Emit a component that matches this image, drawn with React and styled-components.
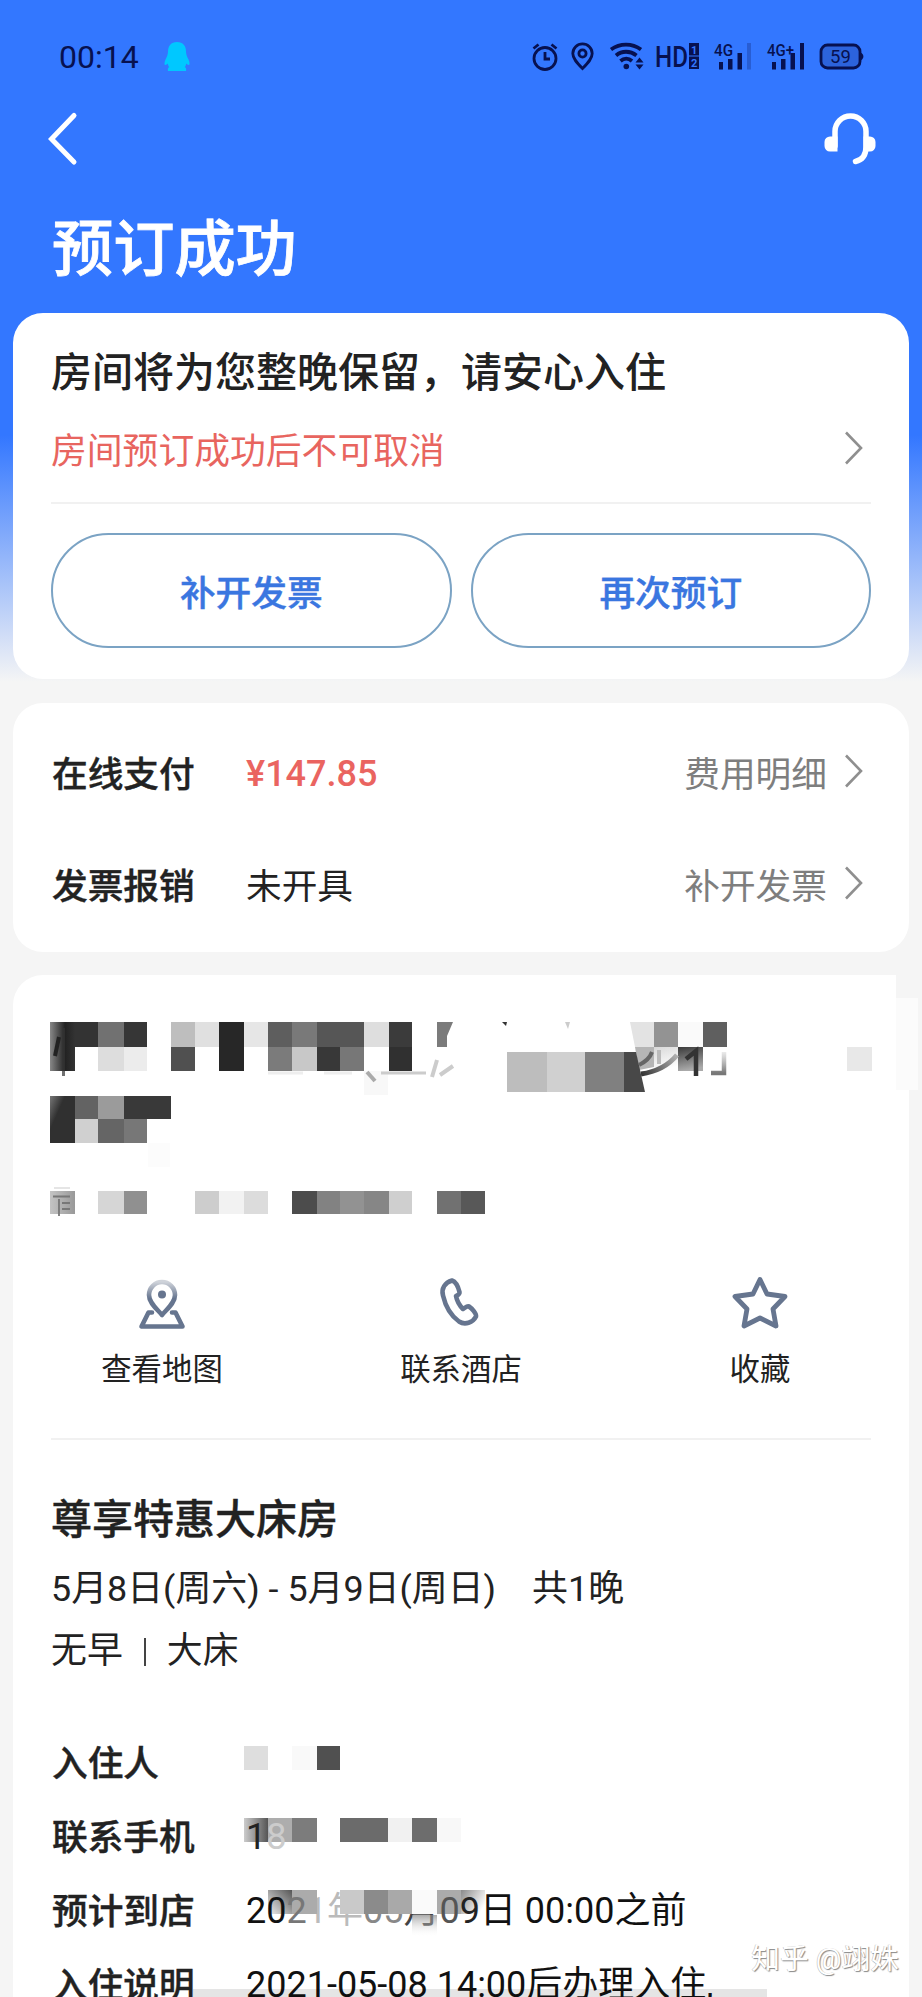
import { styled, createGlobalStyle } from "styled-components";

const GlobalStyle = createGlobalStyle`
  * {
    box-sizing: border-box;
  }
  body {
    margin: 0;
    background: #f5f5f5;
    font-family: Roboto, "Noto Sans CJK SC", sans-serif;
    color: #222;
  }
  svg {
    display: block;
    flex-shrink: 0;
    overflow: visible;
  }
  h1, h2, p {
    margin: 0;
    font-weight: 500;
  }
`;

const Screen = styled.div`
  position: relative;
  width: 922px;
  height: 1997px;
  overflow: hidden;
  background: linear-gradient(180deg, #3377ff 0, #3377ff 435px, #f5f5f5 682px);
`;

const StatusBar = styled.div`
  display: flex;
  align-items: center;
  height: 114px;
  padding: 0 58px 0 59px;
  color: #071150;
`;

const Time = styled.div`
  width: 105px;
  font-size: 32px;
  line-height: 40px;
`;

const StatusIcons = styled.div`
  display: flex;
  align-items: center;
  margin-left: auto;
`;

const Gap = styled.span`
  width: ${({ $w }) => $w}px;
`;

const NavBar = styled.div`
  display: flex;
  align-items: center;
  justify-content: space-between;
  height: 50px;
  padding: 0 46px 0 48px;
`;

const PageTitle = styled.h1`
  padding-left: 52px;
  height: 149px;
  font-size: 61.2px;
  line-height: 173px;
  color: white;
  -webkit-text-stroke: 0.8px white;
`;

const Card = styled.section`
  margin: 0 13px ${({ $gap }) => $gap || 0}px;
  padding: 0 38px;
  height: ${({ $h }) => $h}px;
  border-radius: 30px;
  background: white;
`;

const KeepText = styled.h2`
  padding-top: 32px;
  font-size: 41px;
  line-height: 56px;
  white-space: nowrap;
`;

const CancelRow = styled.div`
  display: flex;
  align-items: center;
  justify-content: space-between;
  height: 93px;
  margin-bottom: 8px;
  padding-right: 8px;
  font-size: 35.8px;
  color: #e8655f;
`;

const Divider = styled.div`
  height: 2px;
  background: #f1f1f1;
`;

const Buttons = styled.div`
  display: flex;
  gap: 19px;
  padding-top: 29px;
`;

const Button = styled.button`
  flex: 1;
  height: 115px;
  padding: 0;
  border: 2px solid #7ba3c4;
  border-radius: 58px;
  background: white;
  font-family: inherit;
  font-size: 35.7px;
  font-weight: 500;
  color: #3a76e0;
  -webkit-text-stroke: 0.4px #3a76e0;
`;

const PayCard = styled(Card)`
  padding-top: 12px;
`;

const PayRow = styled.div`
  display: flex;
  align-items: center;
  height: 112px;
  padding-right: 8px;
  font-size: 35.7px;
`;

const Label = styled.div`
  width: 195px;
  padding-left: 1px;
  font-size: 35.7px;
  font-weight: 500;
  -webkit-text-stroke: 0.4px #222;
`;

const Price = styled.div`
  padding-top: 6px;
  font-size: 36px;
  font-weight: 500;
  color: #ea6460;
`;

const More = styled.div`
  display: flex;
  align-items: center;
  gap: 18px;
  margin-left: auto;
  color: #7e7e7e;
`;

const HotelCard = styled(Card)`
  position: relative;
  border-radius: 30px 0 0 0;
`;

const CornerPatch = styled.div`
  position: absolute;
  top: 0;
  right: -9px;
  width: 22px;
  height: 115px;
  background: linear-gradient(180deg, #f5f5f5 0, #f5f5f5 23px, #fbfbfb 23px);
`;

const HotelName = styled.div`
  padding-top: 39px;
  margin: 0 -1px;
`;

const Actions = styled.div`
  display: grid;
  grid-template-columns: repeat(3, 299px);
  justify-content: center;
  padding-top: 58px;
  height: 220px;
`;

const Action = styled.div`
  display: flex;
  flex-direction: column;
  align-items: center;
  gap: 18px;
  font-size: 30.4px;
  line-height: 44px;
`;

const RoomName = styled.h2`
  padding-top: 50px;
  font-size: 41px;
  line-height: 60px;
  -webkit-text-stroke: 0.4px #222;
`;

const RoomLine = styled.p`
  display: flex;
  font-size: 35.9px;
  font-weight: 400;
  line-height: ${({ $h }) => $h}px;
  white-space: pre;
`;

const Nights = styled.span`
  margin-left: 36px;
`;

const Bar = styled.span`
  width: 2px;
  height: 28px;
  margin: 10px 21px 0;
  background: #444;
`;

const Details = styled.div`
  padding-top: 49px;
`;

const DetailRow = styled.div`
  display: flex;
  align-items: center;
  height: 74px;
  font-size: 36px;
`;

const Value = styled.div`
  position: relative;
  margin-top: 6px;
  line-height: 48px;
  color: #111;
  white-space: nowrap;
`;

const Faded = styled.span`
  position: relative;
  z-index: ${({ $above }) => ($above ? 2 : 0)};
  color: ${({ $color }) => $color};
`;

const Blocks = styled.svg`
  position: absolute;
  left: -2px;
  top: ${({ $top }) => $top}px;
  z-index: 1;
`;

const HomeBar = styled.div`
  position: absolute;
  left: 193px;
  bottom: 0;
  width: 574px;
  height: 8px;
  background: rgba(0, 0, 0, 0.1);
`;

const Watermark = styled.div`
  position: absolute;
  right: 23px;
  bottom: 19px;
  font-size: 28.7px;
  line-height: 38px;
  color: #fff;
  text-shadow: 1px 1px 1px #888, -0.5px -0.5px 0 #bbb;
`;

const AlarmIcon = () => (
  <svg width="26" height="30" viewBox="0 0 26 30" fill="none" stroke="currentColor" strokeWidth="2.8">
    <circle cx="13" cy="16.5" r="11" />
    <path d="M13 10v7h5" />
    <path d="M1.5 6.5 6.5 2.5M24.5 6.5l-5-4" />
  </svg>
);

const PinIcon = () => (
  <svg width="23" height="30" viewBox="0 0 23 30" fill="none" stroke="currentColor" strokeWidth="2.8">
    <path d="M11.5 26.5C6 21 1.8 16.5 1.8 11.5a9.7 9.7 0 0 1 19.4 0c0 5-4.2 9.500-9.700 15z" />
    <circle cx="11.5" cy="11.5" r="3.6" />
  </svg>
);

const WifiIcon = () => (
  <svg width="36" height="30" viewBox="0 0 36 30" fill="none" stroke="currentColor" strokeWidth="3.8">
    <path d="M1 7.5c9-6.500 21-6.500 30 0" />
    <path d="M6 13.5c6-5 14-5 20.500 0" />
    <path d="M10.5 19c3.500-3 8-3 11.500 0" />
    <circle cx="16.3" cy="24.5" r="2.8" fill="currentColor" stroke="none" />
    <path d="M25.5 20.5h8l-4-5zM25.500 22.500h8l-4 5z" fill="currentColor" stroke="none" />
  </svg>
);

const HdIcon = () => (
  <svg width="43" height="30" viewBox="0 0 43 30" fill="currentColor">
    <text x="-1" y="25" fontFamily="Roboto" fontSize="29" fontWeight="500" textLength="33" lengthAdjust="spacingAndGlyphs">
      HD
    </text>
    <path d="M33 1h10v12.5H33zM33 14.500h10V27H33z" />
    <text x="35" y="11.5" fontFamily="Roboto" fontSize="11" fontWeight="700" fill="#3377ff">1</text>
    <text x="35" y="25" fontFamily="Roboto" fontSize="11" fontWeight="700" fill="#3377ff">2</text>
  </svg>
);

const SignalIcon = ({ label, full }) => (
  <svg width="38" height="30" viewBox="0 0 38 30" fill="currentColor">
    <text
      x="0"
      y="14"
      fontFamily="Roboto"
      fontSize="17"
      fontWeight="500"
      textLength={full ? 27 : 19}
      lengthAdjust="spacingAndGlyphs"
    >
      {label}
    </text>
    <rect x="5" y="20" width="4" height="7.5" />
    <rect x="14" y="17" width="4.5" height="10.5" />
    <rect x="23.5" y="11" width="4.5" height="16.5" />
    <rect x="33" y="1" width="4" height="26.5" opacity={full ? 1 : 0.25} />
  </svg>
);

const BatteryIcon = () => (
  <svg width="44" height="30" viewBox="0 0 44 30">
    <rect x="1" y="3" width="39" height="23" rx="6.5" fill="#2c63dc" stroke="currentColor" strokeWidth="2.8" />
    <path d="M40 10.5c4.500 1 4.500 7 0 8z" fill="currentColor" />
    <text x="20.5" y="21" fontFamily="Roboto" fontSize="18.5" textAnchor="middle" fill="currentColor">59</text>
  </svg>
);

const PenguinIcon = () => (
  <svg width="26" height="30" viewBox="0 0 26 30" fill="#00c8ff">
    <path d="M13 0c6 0 9 4 9 9.500 0 3 1 5 2.500 8 1 2.500 1.500 5 .5 5.500-1 .3-2-1-2.700-1.500-.3 1.500-1 3-1.500 3.500 1.200.8 1.700 2 1.200 4H4c-.5-2 0-3.200 1.200-4-.5-.5-1.200-2-1.500-3.500C3 22 2 23.300 1 23c-1-.5-.5-3 .5-5.500C3 14.500 4 12.500 4 9.500 4 4 7 0 13 0z" />
  </svg>
);

const BackIcon = () => (
  <svg width="30" height="54" viewBox="0 0 30 54" fill="none" stroke="white" strokeWidth="5" strokeLinecap="round">
    <path d="M26 3.500 3.500 27 26 50" />
  </svg>
);

const HeadsetIcon = () => (
  <svg width="52" height="54" viewBox="0 0 52 54" fill="white">
    <path
      d="M11 34V19.500a15.500 15.500 0 0 1 31 0V35c0 8-4 13-10.500 14.500"
      fill="none"
      stroke="white"
      strokeWidth="5.500"
      strokeLinecap="round"
    />
    <path d="M13.500 24.500v15H6a5.500 5.500 0 0 1-5.500-5.500v-4A5.500 5.500 0 0 1 6 24.500z" />
    <path d="M39.500 24.500v15H46a5.500 5.500 0 0 0 5.500-5.500v-4a5.500 5.500 0 0 0-5.500-5.500z" />
  </svg>
);

const Chevron = () => (
  <svg width="18" height="34" viewBox="0 0 18 34" fill="none" stroke="#8f8f8f" strokeWidth="2.6">
    <path d="M1 1.500 16 17 1 32.500" />
  </svg>
);

const MapIcon = () => (
  <svg width="52" height="54" viewBox="136 1276 52 54" fill="none" strokeWidth="4.6" strokeLinejoin="round">
    <defs>
      <linearGradient id="pin" x1="0" y1="0" x2="0" y2="1">
        <stop offset="0" stopColor="#cfd3da" />
        <stop offset="0.5" stopColor="#66758f" />
      </linearGradient>
    </defs>
    <path d="M152 1312.500h-3.500l-7 14h41l-7-14H172" stroke="#66758f" strokeLinecap="round" />
    <path d="M162 1315c-5-6-13-12-13-20a13 13 0 0 1 26 0c0 8-8 14-13 20z" fill="white" stroke="url(#pin)" />
    <circle cx="162" cy="1294.500" r="4" fill="#66758f" />
  </svg>
);

const PhoneIcon = () => (
  <svg width="52" height="54" viewBox="435 1276 52 54" fill="none" stroke="#66758f" strokeWidth="4.6" strokeLinejoin="round">
    <path d="M452 1280.500c-7 2-11 8-9 15 3 13 9 21 16 26 6 4 14 1 17-5 .5-3-4-8-7-10-2.500-1-3.500 1.500-6 2.500-4-4-6-8-7-13 2-1 4-2 3.500-4-1-4-3-10-7.500-11.500z" />
  </svg>
);

const StarIcon = () => (
  <svg width="56" height="54" viewBox="732 1276 56 54" fill="none" stroke="#66758f" strokeWidth="4.8" strokeLinejoin="round">
    <path d="m760 1279.500 7 14.500 18 2.500-12 12.500 3 17-16-8-16 8 3-17-12-12.500 18-2.500z" />
  </svg>
);

// [x, y, width, height, fill]
const nameBlocks = [
  [50, 1022, 25, 49, "url(#first)"],
  [75, 1022, 23, 25, "#333"],
  [98, 1022, 26, 25, "#717171"],
  [124, 1022, 23, 25, "#363636"],
  [98, 1047, 26, 24, "#ddd"],
  [124, 1047, 23, 24, "#ececec"],
  [171, 1022, 24, 25, "#bebebe"],
  [195, 1022, 24, 25, "#e0e0e0"],
  [171, 1047, 24, 24, "#505050"],
  [219, 1022, 25, 49, "#272727"],
  [244, 1022, 24, 25, "#e6e6e6"],
  [268, 1022, 24, 25, "#5e5e5e"],
  [292, 1022, 25, 25, "#797979"],
  [317, 1022, 47, 25, "#565656"],
  [268, 1047, 24, 24, "#7b7b7b"],
  [292, 1047, 25, 24, "#c8c8c8"],
  [317, 1047, 23, 24, "#383838"],
  [340, 1047, 24, 24, "#777"],
  [364, 1022, 25, 25, "#dedede"],
  [389, 1022, 23, 25, "#3b3b3b"],
  [389, 1047, 23, 24, "#303030"],
  [364, 1071, 24, 24, "#f8f8f8"],
  [654, 1022, 24, 25, "#939393"],
  [678, 1022, 25, 25, "#fafafa"],
  [703, 1022, 24, 25, "#5f5f5f"],
  [654, 1047, 24, 24, "url(#light)"],
  [678, 1047, 25, 24, "url(#dark)"],
  [847, 1047, 25, 24, "#e8e8e8"],
  [50, 1096, 25, 47, "url(#second)"],
  [75, 1096, 23, 23, "#636363"],
  [98, 1096, 26, 23, "#9b9b9b"],
  [124, 1096, 47, 23, "#393939"],
  [75, 1119, 23, 24, "#d0d0d0"],
  [98, 1119, 26, 24, "#656565"],
  [124, 1119, 23, 24, "#777"],
  [148, 1143, 22, 24, "#fcfcfc"],
  [50, 1191, 25, 23, "url(#third)"],
  [98, 1191, 26, 23, "#d6d6d6"],
  [124, 1191, 23, 23, "#909090"],
  [195, 1191, 24, 23, "#cdcdcd"],
  [219, 1191, 25, 23, "#f2f2f2"],
  [244, 1191, 24, 23, "#dcdcdc"],
  [292, 1191, 25, 23, "#4c4c4c"],
  [317, 1191, 23, 23, "#828282"],
  [340, 1191, 24, 23, "#929292"],
  [364, 1191, 25, 23, "#868686"],
  [389, 1191, 23, 23, "#cfcfcf"],
  [437, 1191, 24, 23, "#717171"],
  [461, 1191, 24, 23, "#585858"],
];

const guestBlocks = [
  [0, 0, 24, 24, "#dedede"],
  [48, 0, 25, 24, "#f9f9f9"],
  [73, 0, 23, 24, "#505050"],
];

const phoneBlocks = [
  [0, 0, 24, 24, "url(#phoneFade)"],
  [24, 0, 24, 24, "#adadad"],
  [48, 0, 25, 24, "#7c7c7c"],
  [96, 0, 48, 24, "#6b6b6b"],
  [144, 0, 24, 24, "#f1f1f1"],
  [168, 0, 25, 24, "#6d6d6d"],
  [193, 0, 24, 24, "#f8f8f8"],
];

const arriveBlocks = [
  [24, 0, 24, 24, "url(#arriveA)"],
  [48, 0, 25, 24, "#ababab"],
  [96, 0, 24, 24, "#c9c9c9"],
  [120, 0, 24, 24, "#8b8b8b"],
  [144, 0, 24, 24, "#a9a9a9"],
  [168, 0, 25, 24, "#fafafa"],
  [193, 0, 24, 24, "#ababab"],
  [217, 0, 24, 24, "url(#arriveB)"],
  [168, 25, 25, 22, "url(#arriveC)"],
];

const renderBlocks = (blocks) =>
  blocks.map(([x, y, w, h, fill]) => (
    <rect key={`${x}-${y}`} x={x} y={y} width={w} height={h} fill={fill} />
  ));

const NameMosaic = () => (
  <svg width="822" height="204" viewBox="50 1014 822 204">
    <defs>
      <linearGradient id="first">
        <stop offset="0" stopColor="#888" />
        <stop offset="0.6" stopColor="#222" />
        <stop offset="1" stopColor="#333" />
      </linearGradient>
      <linearGradient id="second" x1="0" y1="0" x2="0.6" y2="0.5">
        <stop offset="0" stopColor="#777" />
        <stop offset="0.6" stopColor="#303030" />
      </linearGradient>
      <linearGradient id="third">
        <stop offset="0" stopColor="#c4c4c4" />
        <stop offset="1" stopColor="#999" />
      </linearGradient>
      <linearGradient id="dark" x1="0" y1="0" x2="0.2" y2="1">
        <stop offset="0" stopColor="#3a3a3a" />
        <stop offset="1" stopColor="#aaa" />
      </linearGradient>
      <linearGradient id="light" x1="0" y1="0" x2="0.3" y2="1">
        <stop offset="0" stopColor="#d8d8d8" />
        <stop offset="1" stopColor="#fff" />
      </linearGradient>
      <linearGradient id="stroke" gradientUnits="userSpaceOnUse" x1="641" y1="1074" x2="677" y2="1050">
        <stop offset="0" stopColor="#333" />
        <stop offset="1" stopColor="#bbb" />
      </linearGradient>
      <linearGradient id="fade" x1="0" y1="0" x2="0" y2="1">
        <stop offset="0" stopColor="#999" stopOpacity="0.2" />
        <stop offset="1" stopColor="#777" />
      </linearGradient>
    </defs>
    {renderBlocks(nameBlocks)}
    <path d="M437 1022h16l-6 14v11h-10z" fill="#7b7b7b" />
    <path d="M630 1022h24v25h-19z" fill="#e3e3e3" />
    <path d="M635 1047h19v20l-15 3z" fill="#b5b5b5" />
    {/* second, coarser pass of the mosaic brush */}
    <path d="M507 1052h40v40h-40z" fill="#bdbdbd" />
    <path d="M547 1052h38v40h-38z" fill="#d0d0d0" />
    <path d="M585 1052h39v40h-39z" fill="#808080" />
    <path d="M624 1052h12l9 40h-21z" fill="#484848" />
    {/* leftovers of the strokes under the mosaic */}
    <g fill="none" strokeLinecap="butt">
      <path d="M59 1037l-4 19" stroke="#222" strokeWidth="4" />
      <path d="M63.500 1028v48" stroke="#333" strokeWidth="3" opacity="0.7" />
      <path d="M639 1065c6-3 11-7 13-13" stroke="#666" strokeWidth="4" />
      <path d="M641 1074c14-2 27-8 36-19" stroke="url(#stroke)" strokeWidth="5" />
      <path d="M659 1050v14" stroke="#bbb" strokeWidth="4" />
      <path d="M686 1059l10-8v25" stroke="#333" strokeWidth="4.5" />
      <path d="M724 1052v21h-13" stroke="url(#fade)" strokeWidth="4.5" />
      <path d="M367 1072l8 9" stroke="#aaa" strokeWidth="4" />
      <path d="M381 1073h45" stroke="#ccc" strokeWidth="3" />
      <path d="M268 1073h35M324 1073h28" stroke="#eee" strokeWidth="3" />
      <path d="M437 1060l-5 17M453 1066l-13 9" stroke="#ccc" strokeWidth="4" />
      <path d="M53 1196.500h17M59 1199v17M62 1203h8M62 1209h8" stroke="#777" strokeWidth="1.8" />
      <path d="M54 1188h16" stroke="#ddd" strokeWidth="1.5" />
    </g>
    <path d="M502 1022h5l-1 4z" fill="#333" />
    <path d="M565 1022h5l-2 7z" fill="#ccc" />
  </svg>
);

const App = () => (
  <>
    <GlobalStyle />
    <Screen lang="zh-CN">
      <StatusBar>
        <Time>00:14</Time>
        <PenguinIcon />
        <StatusIcons>
          <AlarmIcon />
          <Gap $w={13} />
          <PinIcon />
          <Gap $w={16} />
          <WifiIcon />
          <Gap $w={10} />
          <HdIcon />
          <Gap $w={15} />
          <SignalIcon label="4G" />
          <Gap $w={15} />
          <SignalIcon label="4G+" full />
          <Gap $w={15} />
          <BatteryIcon />
        </StatusIcons>
      </StatusBar>
      <NavBar>
        <BackIcon />
        <HeadsetIcon />
      </NavBar>
      <PageTitle>预订成功</PageTitle>

      <Card $h={366} $gap={24}>
        <KeepText>房间将为您整晚保留，请安心入住</KeepText>
        <CancelRow>
          房间预订成功后不可取消
          <Chevron />
        </CancelRow>
        <Divider />
        <Buttons>
          <Button>补开发票</Button>
          <Button>再次预订</Button>
        </Buttons>
      </Card>

      <PayCard $h={249} $gap={23}>
        <PayRow>
          <Label>在线支付</Label>
          <Price>¥147.85</Price>
          <More>
            费用明细
            <Chevron />
          </More>
        </PayRow>
        <PayRow>
          <Label>发票报销</Label>
          未开具
          <More>
            补开发票
            <Chevron />
          </More>
        </PayRow>
      </PayCard>

      <HotelCard $h={1022}>
        <CornerPatch />
        <HotelName>
          <NameMosaic />
        </HotelName>
        <Actions>
          <Action>
            <MapIcon />
            查看地图
          </Action>
          <Action>
            <PhoneIcon />
            联系酒店
          </Action>
          <Action>
            <StarIcon />
            收藏
          </Action>
        </Actions>
        <Divider />
        <RoomName>尊享特惠大床房</RoomName>
        <RoomLine $h={78}>
          <span>5月8日(周六) - 5月9日(周日)</span>
          <Nights>共1晚</Nights>
        </RoomLine>
        <RoomLine $h={46}>
          无早
          <Bar />
          大床
        </RoomLine>
        <Details>
          <DetailRow>
            <Label>入住人</Label>
            <Value>
              <Blocks width="100" height="24" $top={-17}>
                {renderBlocks(guestBlocks)}
              </Blocks>
            </Value>
          </DetailRow>
          <DetailRow>
            <Label>联系手机</Label>
            <Value>
              <Faded $above $color="#222">1</Faded>
              <Faded $above $color="#ccc">8</Faded>
              <Blocks width="220" height="24" $top={5}>
                <defs>
                  <linearGradient id="phoneFade">
                    <stop offset="0" stopColor="#ccc" />
                    <stop offset="1" stopColor="#555" />
                  </linearGradient>
                </defs>
                {renderBlocks(phoneBlocks)}
              </Blocks>
            </Value>
          </DetailRow>
          <DetailRow>
            <Label>预计到店</Label>
            <Value>
              <Faded $above $color="#111">20</Faded>
              <Faded $above $color="#777">2</Faded>
              <Faded $color="#bbb">1年</Faded>
              <Faded $color="#888">05</Faded>
              <Faded $color="#444">月</Faded>
              <Faded $above $color="#555">0</Faded>
              <Faded $above $color="#222">9</Faded>
              日 00:00之前
              <Blocks width="244" height="48" $top={3}>
                <defs>
                  <linearGradient id="arriveA" x1="1" y1="0" x2="0" y2="1">
                    <stop offset="0" stopColor="#555" />
                    <stop offset="1" stopColor="#eee" />
                  </linearGradient>
                  <linearGradient id="arriveB" x1="0" y1="0" x2="1" y2="0.6">
                    <stop offset="0" stopColor="#8a8a8a" />
                    <stop offset="1" stopColor="#fff" />
                  </linearGradient>
                  <linearGradient id="arriveC" x1="0" y1="0" x2="0" y2="1">
                    <stop offset="0" stopColor="#888" stopOpacity="0.7" />
                    <stop offset="1" stopColor="#fff" stopOpacity="0" />
                  </linearGradient>
                </defs>
                {renderBlocks(arriveBlocks)}
              </Blocks>
            </Value>
          </DetailRow>
          <DetailRow>
            <Label>入住说明</Label>
            <Value>2021-05-08 14:00后办理入住,</Value>
          </DetailRow>
        </Details>
      </HotelCard>
      <HomeBar />
      <Watermark>知乎 @翊姝</Watermark>
    </Screen>
  </>
);

export default App;
